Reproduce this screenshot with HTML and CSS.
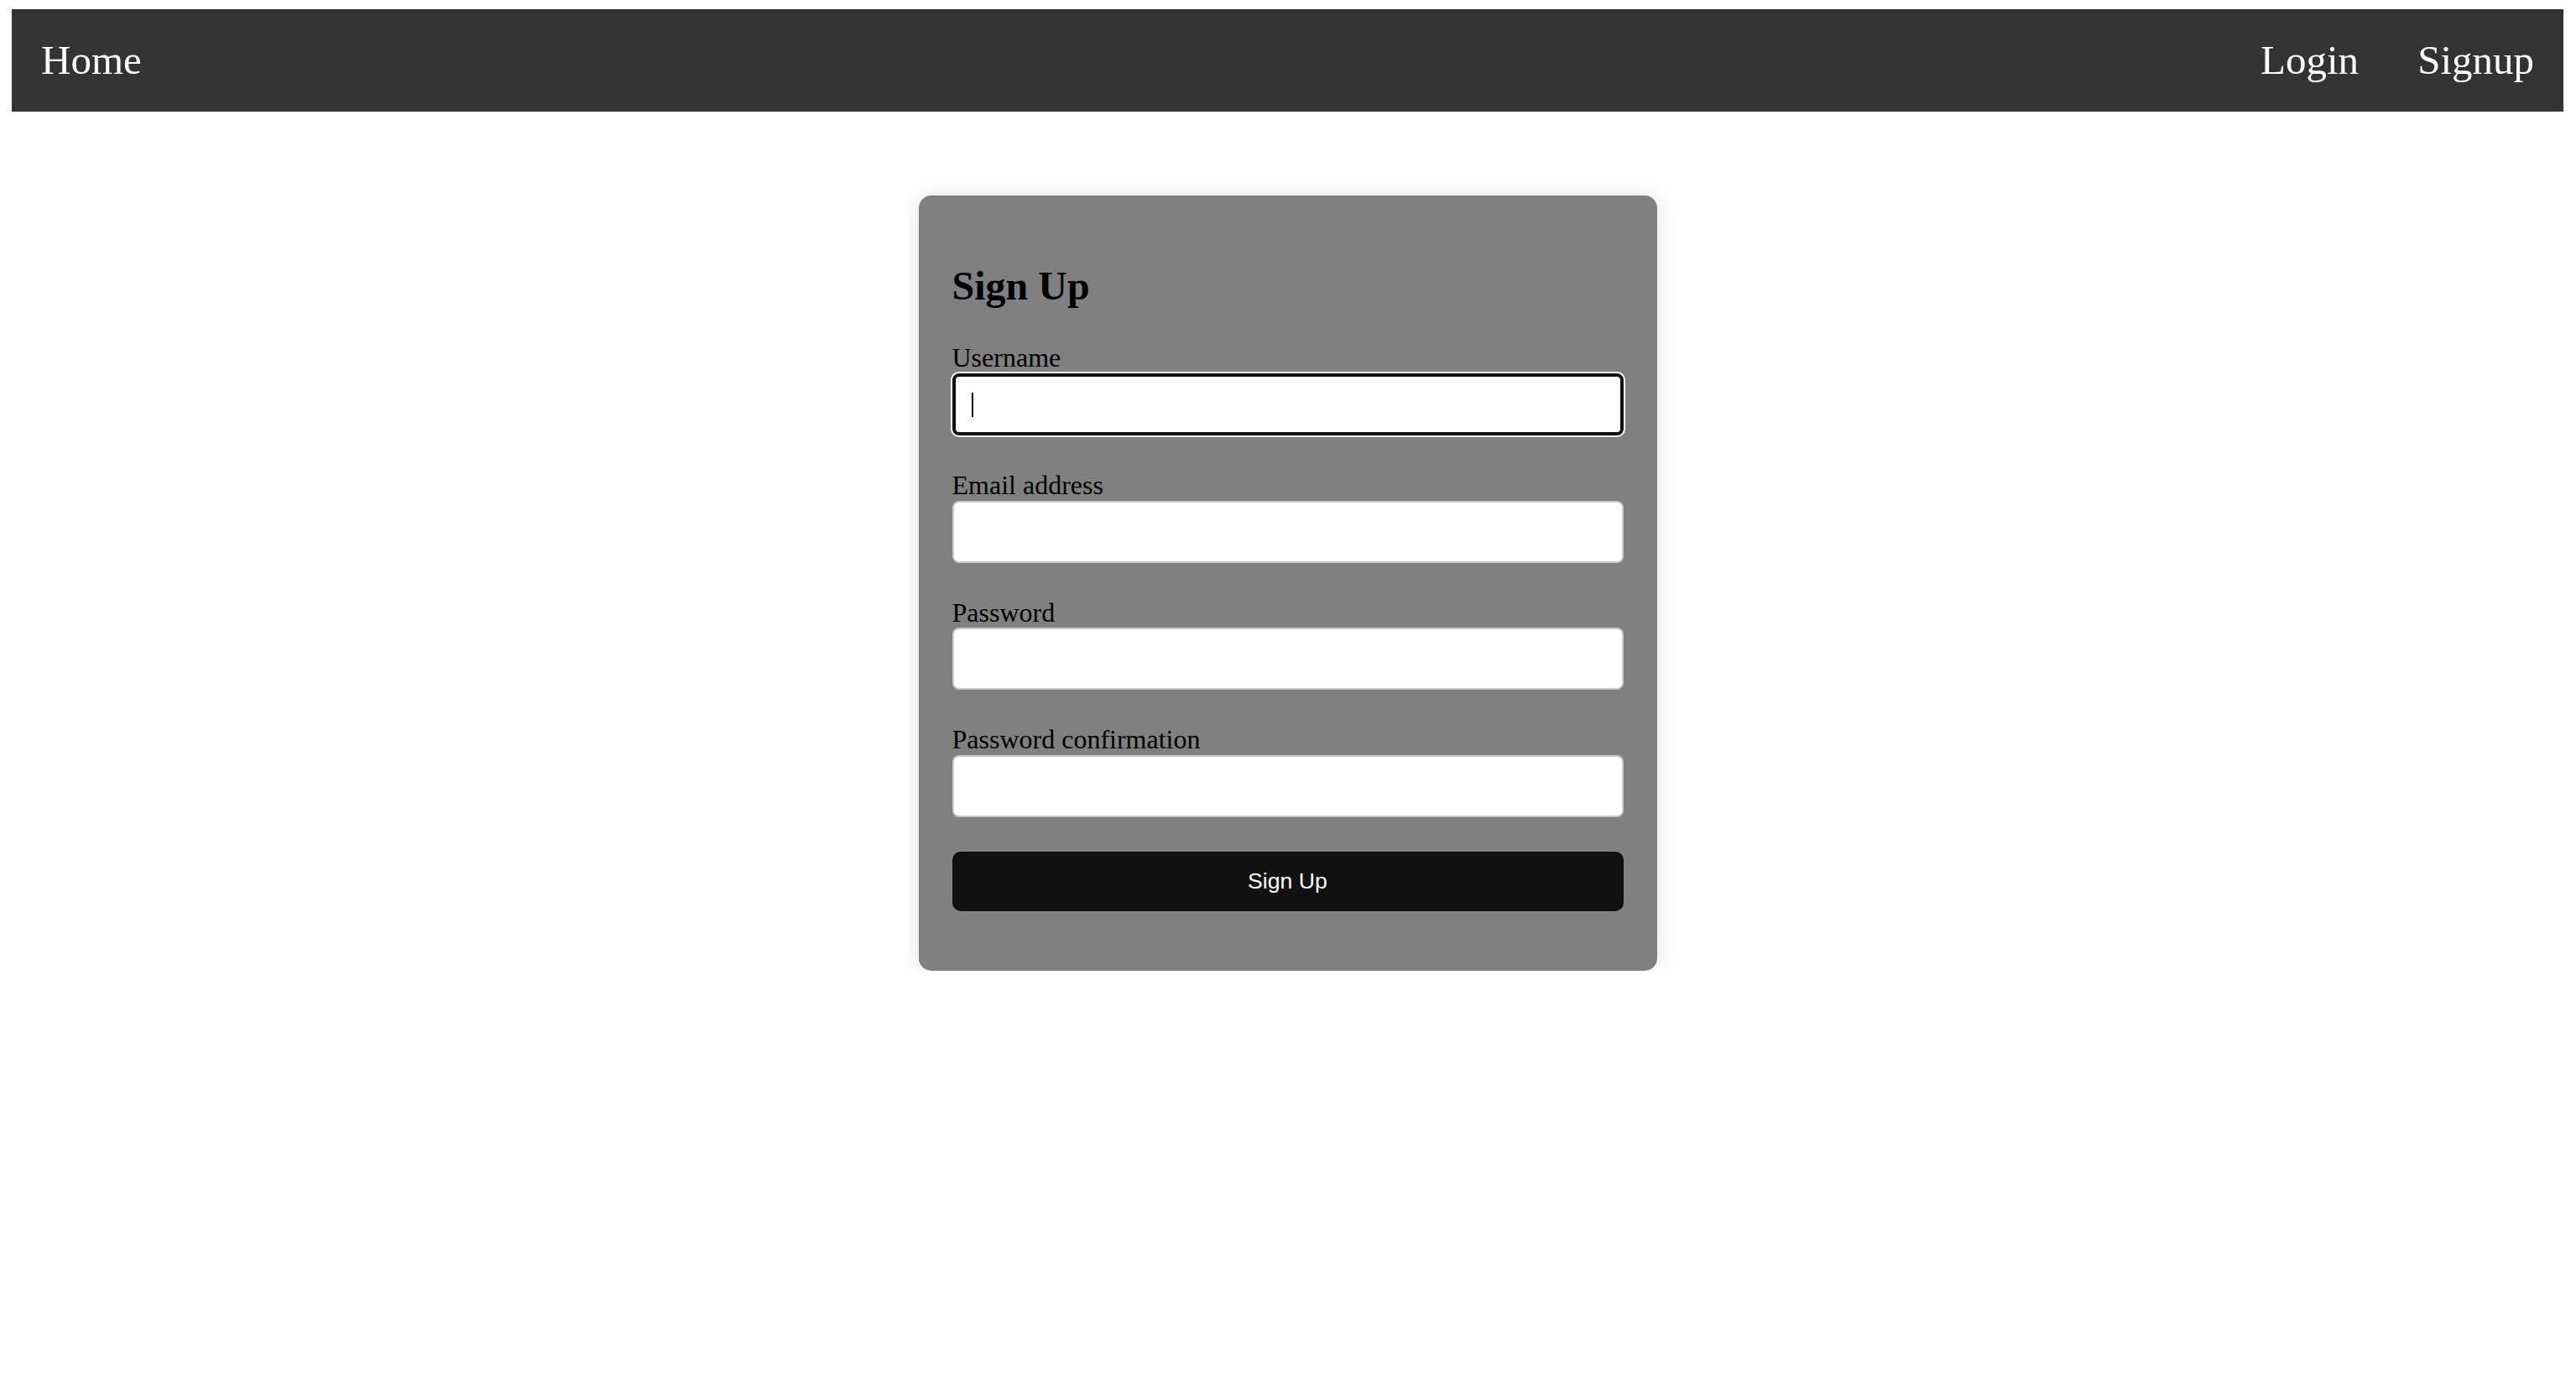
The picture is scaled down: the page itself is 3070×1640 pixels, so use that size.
FILE: index.html
```html
<!DOCTYPE html>
<html lang="en">
<head>
<meta charset="utf-8">
<title>Sign Up</title>
<link rel="stylesheet" href="styles.css">
</head>
<body>
<nav class="navbar">
  <a class="nav-link" href="#">Home</a>
  <div class="nav-right">
    <a class="nav-link" href="#">Login</a>
    <a class="nav-link" href="#">Signup</a>
  </div>
</nav>
<main class="page">
  <section class="card">
    <h2 class="card-title">Sign Up</h2>
    <form class="form">
      <div class="field">
        <label class="field-label" for="username">Username</label>
        <div class="input-wrap">
          <input class="field-input is-focused" id="username" type="text">
          <span class="caret"></span>
        </div>
      </div>
      <div class="field">
        <label class="field-label" for="email">Email address</label>
        <input class="field-input" id="email" type="email">
      </div>
      <div class="field">
        <label class="field-label" for="password">Password</label>
        <input class="field-input" id="password" type="password">
      </div>
      <div class="field">
        <label class="field-label" for="password2">Password confirmation</label>
        <input class="field-input" id="password2" type="password">
      </div>
      <button class="submit-btn" type="button">Sign Up</button>
    </form>
  </section>
</main>
</body>
</html>
```
FILE: styles.css
```css
html, body {
  background: #ffffff;
}
body {
  margin: 11px 15px 0 14px;
  font-family: "Liberation Serif", "Times New Roman", serif;
  color: #000;
}
.navbar {
  display: flex;
  align-items: center;
  justify-content: space-between;
  height: 122px;
  background: #333333;
}
.nav-right {
  display: flex;
  align-items: center;
}
.nav-link {
  padding: 0 35px;
  font-size: 49px;
  line-height: 1.149;
  color: #ffffff;
  text-decoration: none;
}
.page {
  display: flex;
  justify-content: center;
  padding-top: 100px;
}
.card {
  width: 880px;
  box-sizing: border-box;
  padding: 40px 40px 71px;
  background: #808080;
  border-radius: 15px;
  box-shadow: 0 0 24px rgba(0, 0, 0, 0.12);
}
.card-title {
  margin: 40px 0;
  font-size: 48px;
  font-weight: bold;
  line-height: 1.149;
}
.form {
  display: flex;
  flex-direction: column;
  gap: 41px;
  margin: 0;
}
.field {
  display: flex;
  flex-direction: column;
}
.field-label {
  font-size: 32px;
  line-height: 1.149;
}
.input-wrap {
  position: relative;
}
.field-input {
  display: block;
  width: 100%;
  height: 74px;
  box-sizing: border-box;
  margin: 0;
  padding: 0 20px;
  border: 2px solid #c9c9c9;
  border-radius: 8px;
  background: #ffffff;
  font-size: 28px;
  outline: none;
}
.field-input.is-focused {
  border: 4px solid #101010;
  box-shadow: 0 0 0 2px #ffffff;
}
.caret {
  position: absolute;
  left: 23px;
  top: 23px;
  width: 2px;
  height: 29px;
  background: #000;
}
.submit-btn {
  display: block;
  width: 100%;
  height: 71px;
  margin: 0;
  border: none;
  border-radius: 10px;
  background: #111111;
  color: #ffffff;
  font-family: "Liberation Sans", Arial, sans-serif;
  font-size: 26.67px;
  cursor: pointer;
}
```
